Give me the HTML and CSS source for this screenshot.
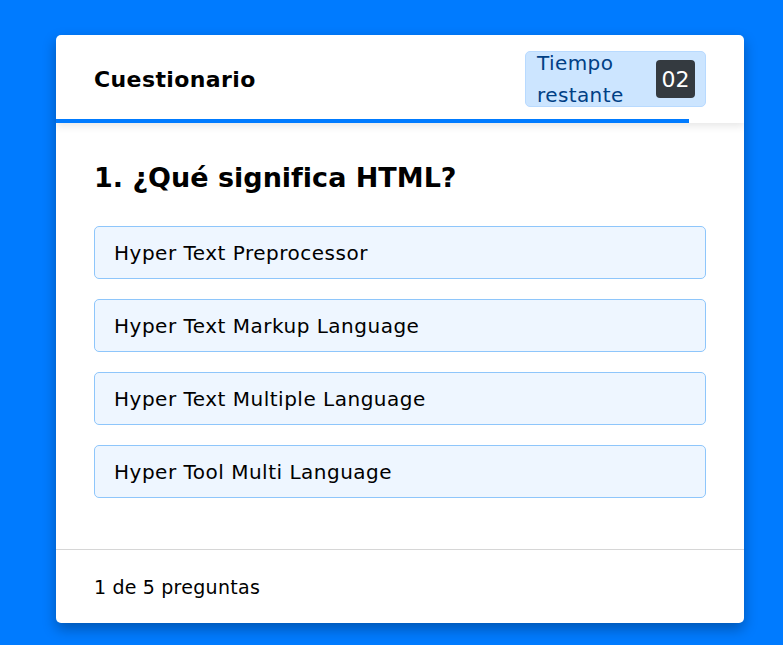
FILE: index.html
```html
<!DOCTYPE html>
<html lang="es">
<head>
<meta charset="utf-8">
<title>Cuestionario</title>
<link rel="stylesheet" href="styles.css">
</head>
<body>
<div class="card">
  <header class="quiz-header">
    <div class="header-row">
      <div class="title">Cuestionario</div>
      <div class="timer">
        <span class="timer-text">Tiempo restante</span>
        <span class="timer-count">02</span>
      </div>
    </div>
    <div class="progress"><div class="progress-fill" style="width: 92%"></div></div>
  </header>
  <section class="quiz-body">
    <h2 class="question">1. ¿Qué significa HTML?</h2>
    <ul class="options">
      <li class="option">Hyper Text Preprocessor</li>
      <li class="option">Hyper Text Markup Language</li>
      <li class="option">Hyper Text Multiple Language</li>
      <li class="option">Hyper Tool Multi Language</li>
    </ul>
  </section>
  <footer class="quiz-footer"><b class="num">1</b> de <b class="num">5</b> preguntas</footer>
</div>
</body>
</html>
```
FILE: styles.css
```css
* { box-sizing: border-box; }
html, body { margin: 0; }
body {
  background: #007bff;
  font-family: "DejaVu Sans", "Liberation Sans", sans-serif;
  color: #000;
  padding: 35px 0 0 56px;
  min-height: 645px;
}
.card {
  width: 688px;
  background: #fff;
  border-radius: 5px;
  box-shadow: 0 6px 14px rgba(0, 0, 0, 0.3);
  overflow: hidden;
}
.quiz-header {
  box-shadow: 0 3px 8px rgba(0, 0, 0, 0.1);
  position: relative;
  z-index: 1;
}
.header-row {
  height: 84px;
  padding: 4px 38px 0;
  display: flex;
  align-items: center;
  justify-content: space-between;
}
.title {
  font-size: 22px;
  font-weight: 700;
  letter-spacing: 0.4px;
}
.timer {
  width: 181px;
  height: 56px;
  background: #cce5ff;
  border: 1px solid #b8daff;
  border-radius: 5px;
  color: #004085;
  display: flex;
  align-items: center;
  justify-content: space-between;
  padding: 0 10px 0 11px;
}
.timer-text {
  width: 100px;
  font-size: 20px;
  letter-spacing: 0.4px;
  line-height: 32px;
}
.timer-count {
  width: 39px;
  height: 38px;
  background: #343a40;
  color: #fff;
  border-radius: 4px;
  font-size: 22px;
  display: flex;
  align-items: center;
  justify-content: center;
}
.progress {
  height: 4px;
}
.progress-fill {
  height: 100%;
  background: #007bff;
}
.quiz-body {
  padding: 34px 38px 51px;
}
.question {
  margin: 0 0 27px;
  font-size: 27px;
  line-height: 42px;
  font-weight: 700;
}
.options {
  list-style: none;
  margin: 0;
  padding: 0;
  display: flex;
  flex-direction: column;
  gap: 20px;
}
.option {
  height: 53px;
  display: flex;
  align-items: center;
  padding: 0 19px;
  background: #eef6ff;
  border: 1px solid #8ec6fb;
  border-radius: 5px;
  font-size: 20px;
  letter-spacing: 0.5px;
}
.quiz-footer {
  border-top: 1px solid #d6d6d6;
  height: 74px;
  padding: 0 38px;
  display: flex;
  align-items: center;
  gap: 6px;
  font-size: 19px;
  letter-spacing: 0.3px;
}
.num { font-weight: 500; }
```
